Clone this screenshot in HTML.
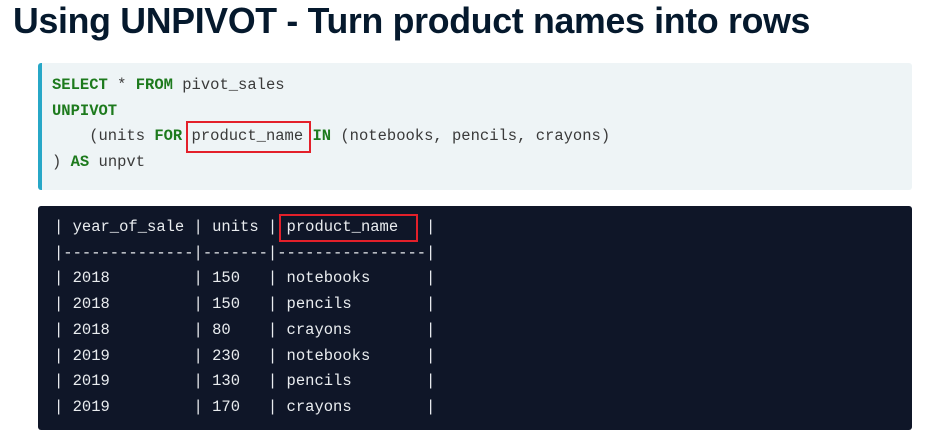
<!DOCTYPE html>
<html><head><meta charset="utf-8"><style>
body{margin:0;background:#fff;width:937px;height:443px;overflow:hidden;position:relative;font-family:"Liberation Sans",sans-serif}
h1{position:absolute;left:13px;top:1px;margin:0;font-size:35.7px;font-weight:bold;color:#05192d;letter-spacing:-0.3px}
.c1{position:absolute;left:38px;top:63px;width:874px;height:127px;background:#eef4f6;border-left:4px solid #27a7c7;border-radius:3px;box-sizing:border-box}
.c2{position:absolute;left:38px;top:206px;width:874px;height:224px;background:#0f1628;border-radius:3px}
pre{margin:0;position:absolute;font-family:"Liberation Mono",monospace;font-size:15.5px;line-height:25.7px}
.c1 pre{left:10px;top:10px;color:#3a3a3a}
.c2 pre{left:16px;top:9px;color:#e9ecef}
b{color:#1d7a1d}
.r{position:absolute;border:2px solid #e3202a;box-sizing:border-box}
</style></head><body>
<h1>Using UNPIVOT - Turn product names into rows</h1>
<div class="c1"><pre><b>SELECT</b> * <b>FROM</b> pivot_sales
<b>UNPIVOT</b>
    (units <b>FOR</b> product_name <b>IN</b> (notebooks, pencils, crayons)
) <b>AS</b> unpvt</pre></div>
<div class="c2"><pre>| year_of_sale | units | product_name   |
|--------------|-------|----------------|
| 2018         | 150   | notebooks      |
| 2018         | 150   | pencils        |
| 2018         | 80    | crayons        |
| 2019         | 230   | notebooks      |
| 2019         | 130   | pencils        |
| 2019         | 170   | crayons        |</pre></div>
<div class="r" style="left:186px;top:121px;width:125px;height:32px"></div>
<div class="r" style="left:279px;top:214px;width:139px;height:28px"></div>
</body></html>
